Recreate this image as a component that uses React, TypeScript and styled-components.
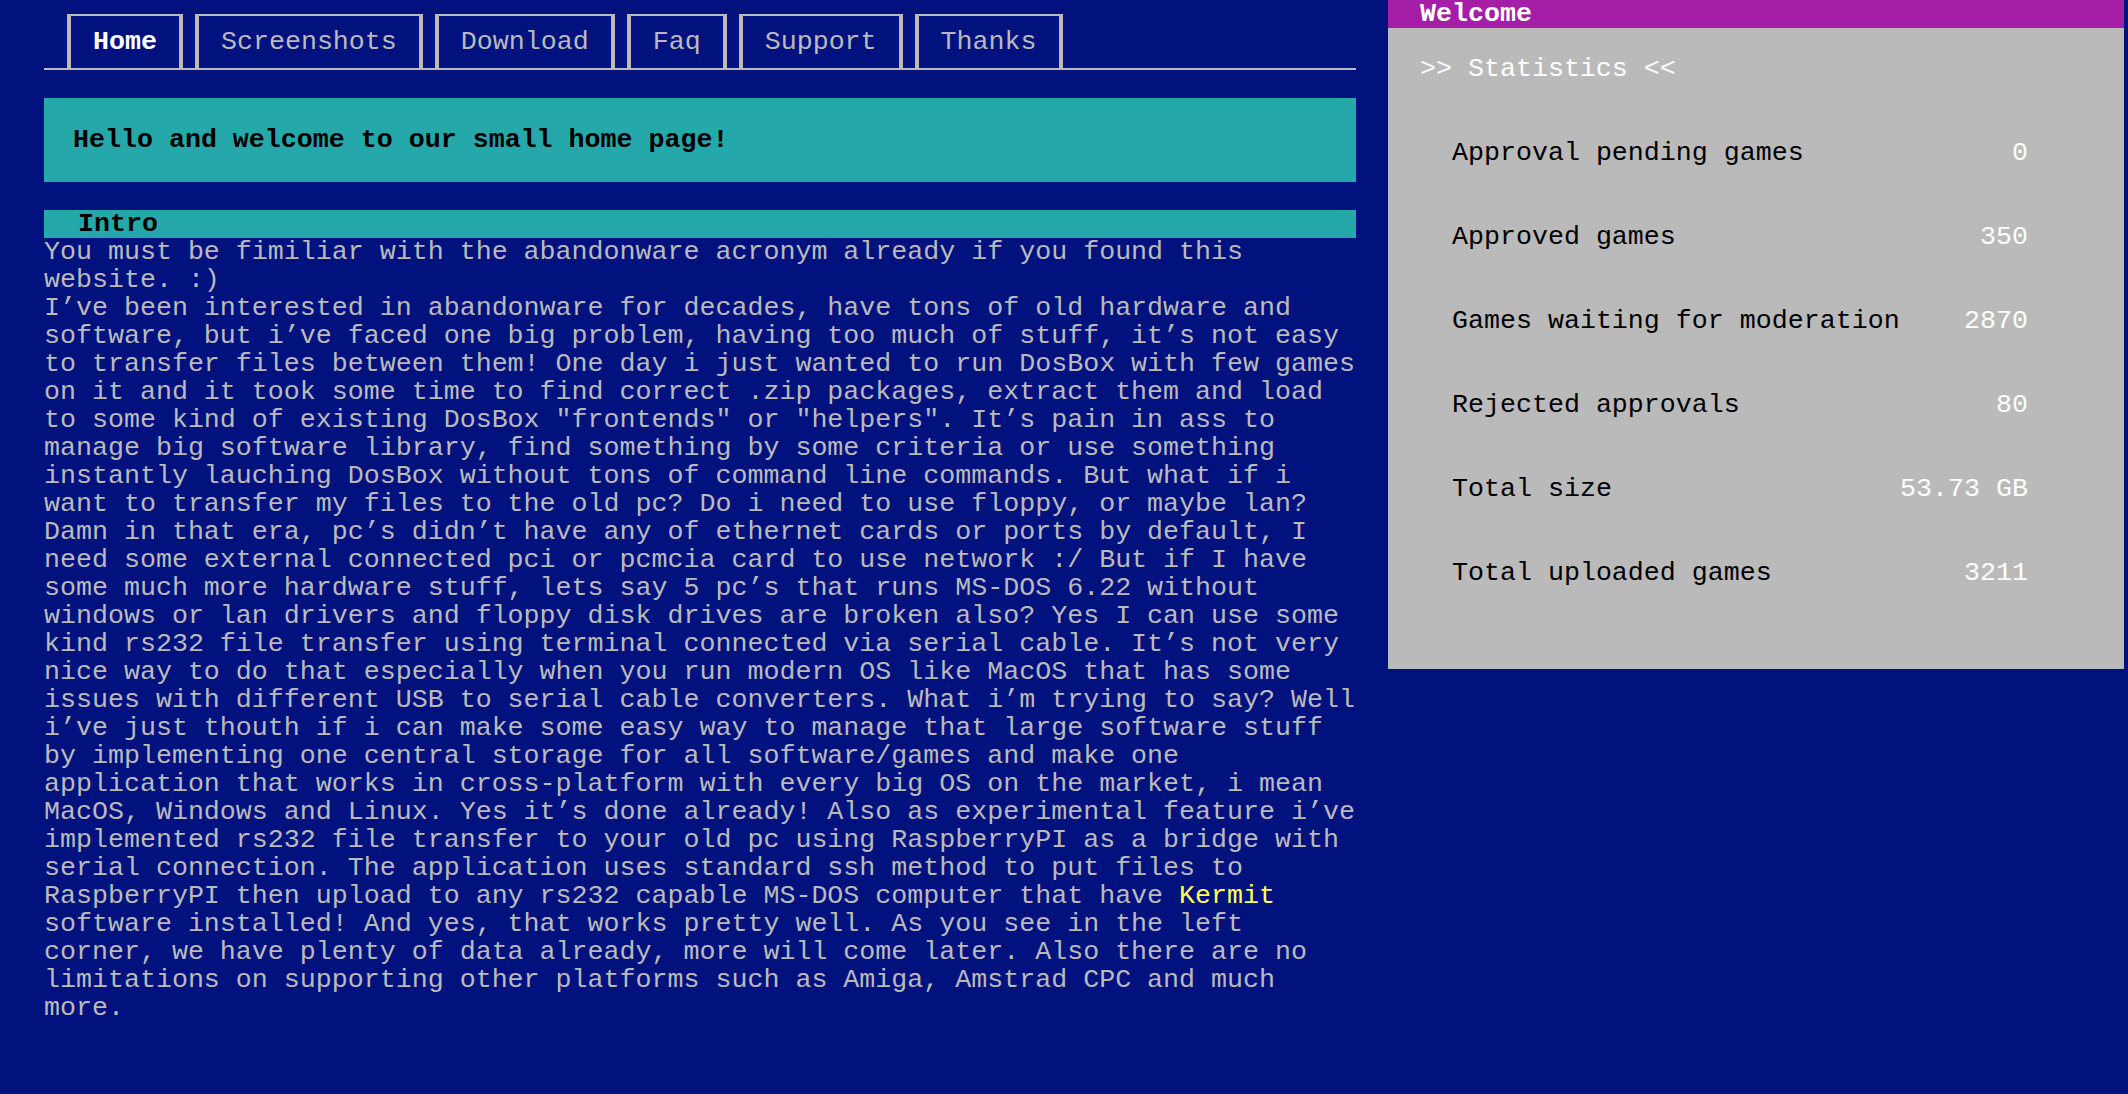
import React from "react";
import styled, { createGlobalStyle } from "styled-components";

const NAVY = "#01127f";
const TEAL = "#25a8aa";
const GREY = "#bababa";
const PURPLE = "#a51ea8";

const GlobalStyle = createGlobalStyle`
  html, body {
    margin: 0;
    padding: 0;
    background: ${NAVY};
  }
  body {
    font-family: "Liberation Mono", "DejaVu Sans Mono", monospace;
    font-size: 26.65px;
    line-height: 28px;
    color: ${GREY};
  }
  * { box-sizing: border-box; }
`;

const Page = styled.div`
  display: grid;
  grid-template-columns: 1312px 736px;
  column-gap: 32px;
  padding: 0 4px 0 44px;
  align-items: start;
  min-height: 1094px;
`;

const Main = styled.main`
  display: flex;
  flex-direction: column;
  min-width: 0;
`;

const TabBar = styled.nav`
  display: flex;
  gap: 12px;
  padding: 14px 0 0 23px;
  border-bottom: 2px solid ${GREY};
`;

const Tab = styled.a<{ $active?: boolean }>`
  display: flex;
  align-items: center;
  height: 54px;
  padding: 0 22px;
  border: 4px solid ${GREY};
  border-top-width: 2px;
  border-bottom: none;
  color: ${(p) => (p.$active ? "#ffffff" : GREY)};
  font-weight: ${(p) => (p.$active ? 700 : 400)};
  text-decoration: none;
  white-space: nowrap;
`;

const Hello = styled.div`
  display: flex;
  align-items: center;
  height: 84px;
  margin-top: 28px;
  padding: 0 29px;
  background: ${TEAL};
  color: #000;
  font-weight: 700;
`;

const SectionTitle = styled.h2`
  margin: 28px 0 0;
  height: 28px;
  padding-left: 34px;
  background: ${TEAL};
  color: #000;
  font-size: inherit;
  line-height: 28px;
  font-weight: 700;
`;

const Text = styled.p`
  margin: 0;
  width: 1322px;
  color: ${GREY};
`;

const Highlight = styled.a`
  color: #ffff55;
  text-decoration: none;
`;

const Panel = styled.aside`
  display: flex;
  flex-direction: column;
  background: ${GREY};
`;

const PanelHeader = styled.div`
  height: 28px;
  padding-left: 32px;
  background: ${PURPLE};
  color: #fff;
  font-weight: 700;
`;

const PanelBody = styled.div`
  display: flex;
  flex-direction: column;
  padding: 27px 96px 82px 32px;
`;

const PanelTitle = styled.div`
  color: #fff;
  white-space: pre;
`;

const StatList = styled.div`
  display: flex;
  flex-direction: column;
  gap: 56px;
  margin-top: 56px;
  padding-left: 32px;
`;

const StatRow = styled.div`
  display: flex;
  justify-content: space-between;
  height: 28px;
`;

const StatLabel = styled.span`
  color: #000;
`;

const StatValue = styled.span`
  color: #fff;
`;

const tabs = ["Home", "Screenshots", "Download", "Faq", "Support", "Thanks"];

const stats: [string, string][] = [
  ["Approval pending games", "0"],
  ["Approved games", "350"],
  ["Games waiting for moderation", "2870"],
  ["Rejected approvals", "80"],
  ["Total size", "53.73 GB"],
  ["Total uploaded games", "3211"],
];

export default function App() {
  return (
    <>
      <GlobalStyle />
      <Page>
        <Main>
          <TabBar>
            {tabs.map((t, i) => (
              <Tab key={t} href="#" $active={i === 0}>
                {t}
              </Tab>
            ))}
          </TabBar>
          <Hello>Hello and welcome to our small home page!</Hello>
          <SectionTitle>Intro</SectionTitle>
          <Text>
            You must be fimiliar with the abandonware acronym already if you found this website. :)
            <br />
            I’ve been interested in abandonware for decades, have tons of old hardware and software,
            but i’ve faced one big problem, having too much of stuff, it’s not easy to transfer files
            between them! One day i just wanted to run DosBox with few games on it and it took some
            time to find correct .zip packages, extract them and load to some kind of existing DosBox
            "frontends" or "helpers". It’s pain in ass to manage big software library, find something
            by some criteria or use something instantly lauching DosBox without tons of command line
            commands. But what if i want to transfer my files to the old pc? Do i need to use floppy,
            or maybe lan? Damn in that era, pc’s didn’t have any of ethernet cards or ports by default,
            I need some external connected pci or pcmcia card to use network :/ But if I have some
            much more hardware stuff, lets say 5 pc’s that runs MS-DOS 6.22 without windows or lan
            drivers and floppy disk drives are broken also? Yes I can use some kind rs232 file
            transfer using terminal connected via serial cable. It’s not very nice way to do that
            especially when you run modern OS like MacOS that has some issues with different USB to
            serial cable converters. What i’m trying to say? Well i’ve just thouth if i can make some
            easy way to manage that large software stuff by implementing one central storage for all
            software/games and make one application that works in cross-platform with every big OS on
            the market, i mean MacOS, Windows and Linux. Yes it’s done already! Also as experimental
            feature i’ve implemented rs232 file transfer to your old pc using RaspberryPI as a bridge
            with serial connection. The application uses standard ssh method to put files to
            RaspberryPI then upload to any rs232 capable MS-DOS computer that have{" "}
            <Highlight href="#">Kermit</Highlight> software installed! And yes, that works pretty
            well. As you see in the left corner, we have plenty of data already, more will come
            later. Also there are no limitations on supporting other platforms such as Amiga,
            Amstrad CPC and much more.
          </Text>
        </Main>
        <Panel>
          <PanelHeader>Welcome</PanelHeader>
          <PanelBody>
            <PanelTitle>{">> Statistics <<"}</PanelTitle>
            <StatList>
              {stats.map(([label, value]) => (
                <StatRow key={label}>
                  <StatLabel>{label}</StatLabel>
                  <StatValue>{value}</StatValue>
                </StatRow>
              ))}
            </StatList>
          </PanelBody>
        </Panel>
      </Page>
    </>
  );
}
